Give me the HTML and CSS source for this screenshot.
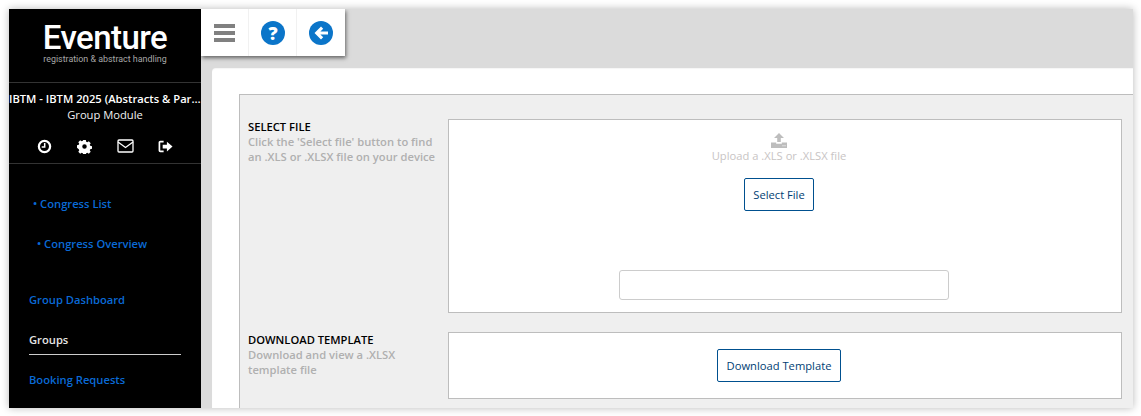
FILE: index.html
```html
<!DOCTYPE html>
<html lang="en">
<head>
<meta charset="utf-8">
<title>Eventure</title>
<link rel="stylesheet" href="styles.css">
</head>
<body>
<div class="window">
  <aside class="sidebar">
    <div class="brand">
      <div class="logo">Eventure</div>
      <div class="tagline">registration &amp; abstract handling</div>
    </div>
    <div class="congress">
      <div class="congress-name">IBTM - IBTM 2025 (Abstracts &amp; Participants)</div>
      <div class="module">Group Module</div>
    </div>
    <div class="tools">
      <svg class="tool" viewBox="0 0 16 16"><circle cx="8" cy="8" r="6" fill="none" stroke="#fff" stroke-width="2.4"/><path d="M8.2 4.2v4.3H5" fill="none" stroke="#fff" stroke-width="1.6"/></svg>
      <svg class="tool tool-shift" viewBox="0 0 16 16"><path fill="#fff" fill-rule="evenodd" d="M6.6 1h2.8l.4 1.9 1.2.5 1.6-1 2 2-1 1.6.5 1.2 1.9.4v2.8l-1.9.4-.5 1.2 1 1.6-2 2-1.6-1-1.2.5-.4 1.9H6.6l-.4-1.9-1.2-.5-1.6 1-2-2 1-1.6-.5-1.2L0 9.4V6.6l1.9-.4.5-1.2-1-1.6 2-2 1.6 1 1.2-.5zM8 5.6a2.4 2.4 0 1 0 0 4.8 2.4 2.4 0 0 0 0-4.8z"/></svg>
      <svg class="tool tool-wide" viewBox="0 0 17 14"><rect x="1" y="1" width="15" height="12" rx="1" fill="none" stroke="#fff" stroke-width="1.3"/><path d="M1 3l7.500 5.500L16 3" fill="none" stroke="#fff" stroke-width="1.3"/></svg>
      <svg class="tool" viewBox="0 0 16 16"><path d="M6 2.800H2.500a1 1 0 0 0-1 1v8.400a1 1 0 0 0 1 1H6" fill="none" stroke="#fff" stroke-width="1.800"/><path fill="#fff" d="M5 6h4.500V2.800L15.500 8l-6 5.200V10H5z"/></svg>
    </div>
    <nav class="nav">
      <a class="nav-link sub">• Congress List</a>
      <a class="nav-link sub sub-deep">• Congress Overview</a>
      <a class="nav-link main">Group Dashboard</a>
      <a class="nav-link main active">Groups</a>
      <a class="nav-link main">Booking Requests</a>
    </nav>
  </aside>
  <main class="content">
    <div class="topbar">
      <div class="toolbar">
        <button class="tool-btn">
          <svg class="menu-icon" viewBox="0 0 22 18"><path d="M0 0h21v4H0zM0 7h21v4H0zM0 14h21v4H0z" fill="#808080"/></svg>
        </button>
        <button class="tool-btn">
          <svg class="round-icon" viewBox="0 0 24 24"><circle cx="12" cy="12" r="12" fill="#0b75c9"/><text class="q-mark" x="12" y="18.500" text-anchor="middle">?</text></svg>
        </button>
        <button class="tool-btn">
          <svg class="round-icon" viewBox="0 0 24 24"><circle cx="12" cy="12" r="12" fill="#0b75c9"/><path d="M12 5.500 5.500 12l6.500 6.500 2.200-2.200-2.800-2.700H19v-3.200h-7.600l2.800-2.700z" fill="#fff"/></svg>
        </button>
      </div>
    </div>
    <div class="card">
      <div class="panel">
        <section class="row row-file">
          <div class="label">
            <h3>SELECT FILE</h3>
            <p>Click the 'Select file' button to find an .XLS or .XLSX file on your device</p>
          </div>
          <div class="box box-file">
            <svg class="upload" viewBox="0 0 16 15"><path fill="#bdbdbd" fill-rule="evenodd" d="M8 0l5 5H9.800v4H6.200V5H3zM0 9.500h5.200v1.300h5.600V9.500H16V15H0zM11.500 12.200v1h1v-1zM13.500 12.200v1h1v-1z"/></svg>
            <div class="hint">Upload a .XLS or .XLSX file</div>
            <button class="btn btn-select">Select File</button>
            <div class="filename"></div>
          </div>
        </section>
        <section class="row row-template">
          <div class="label">
            <h3>DOWNLOAD TEMPLATE</h3>
            <p>Download and view a .XLSX template file</p>
          </div>
          <div class="box box-template">
            <button class="btn btn-template">Download Template</button>
          </div>
        </section>
      </div>
    </div>
  </main>
</div>
</body>
</html>
```
FILE: styles.css
```css
* { box-sizing: border-box; }
html, body { margin: 0; height: 100%; background: #fff; overflow: hidden; }
body { padding: 9px 8px 8px 9px; font-family: "Open Sans", sans-serif; font-size: 11.2px; }
.window {
  display: flex;
  width: 1124px;
  height: 399px;
  overflow: hidden;
  box-shadow: 0 0 8px rgba(0,0,0,.28);
}
.sidebar { width: 192px; flex: none; background: #000; color: #fff; }
.brand { height: 74px; padding-top: 13px; border-bottom: 1px solid #333; text-align: center; }
.logo { font-family: Roboto, sans-serif; font-size: 33px; font-weight: 500; line-height: 31px; letter-spacing: -.55px; color: #fff; }
.tagline { font-family: Roboto, sans-serif; font-size: 8.9px; line-height: 10px; color: #a8a8a8; margin-top: 1px; }
.congress { padding-top: 8px; text-align: center; }
.congress-name { line-height: 16px; font-weight: 600; white-space: nowrap; overflow: hidden; text-overflow: ellipsis; }
.module { line-height: 16px; color: #f0f0f0; }
.tools { display: flex; justify-content: space-between; align-items: center; height: 41px; padding: 6px 28px 0 28px; border-bottom: 1px solid #333; }
.tool { width: 15px; height: 15px; }
.tool-shift { margin-left: 1px; }
.tool-wide { width: 17px; height: 14px; margin-left: 1px; }
.nav { display: flex; flex-direction: column; }
.nav-link { display: block; font-weight: 600; line-height: 16px; color: #0a6ad6; }
.sub { padding-left: 24px; margin-top: 24px; }
.sub:first-child { margin-top: 32px; }
.sub-deep { padding-left: 28px; }
.main { margin: 24px 20px 0 20px; }
.sub-deep + .main { margin-top: 40px; }
.active { color: #e6e6e6; padding-bottom: 6px; border-bottom: 1px solid #ccc; margin-bottom: -7px; }
.content { flex: 1; min-width: 0; background: #dbdbdb; display: flex; flex-direction: column; }
.topbar { height: 59px; flex: none; }
.toolbar {
  display: flex;
  width: 144px;
  height: 47px;
  background: #fff;
  box-shadow: 1px 2px 4px rgba(0,0,0,.55);
}
.tool-btn { width: 48px; flex: none; display: flex; align-items: center; justify-content: center; border: 0; border-right: 1px solid #f1f1f1; background: #fff; padding: 0; }
.tool-btn:last-child { border-right: 0; }
.menu-icon { width: 22px; height: 18px; margin-left: 1px; }
.round-icon { width: 24px; height: 24px; }
.q-mark { font-family: "Open Sans", sans-serif; font-weight: 800; font-size: 18px; fill: #fff; }
.card { flex: 1; margin-left: 11px; background: #fff; border-radius: 4px 0 0 0; padding: 26px 0 0 27px; box-shadow: inset 0 1px 1px rgba(0,0,0,.04); }
.panel { background: #efefef; border: 1px solid #bdbdbd; border-right: 0; border-bottom: 0; padding: 24px 11px 0 8px; height: 100%; }
.row { display: flex; }
.row-template { margin-top: 19px; }
.label { width: 200px; flex: none; line-height: 15px; font-weight: 600; padding-right: 10px; }
.label h3 { margin: 0; font-size: inherit; line-height: 15px; font-weight: 600; color: #000; }
.label p { margin: 0; color: #b0b0b0; }
.box { flex: 1; background: #fff; border: 1px solid #bdbdbd; display: flex; flex-direction: column; align-items: center; }
.box-file { height: 194px; padding-top: 13px; }
.upload { width: 16px; height: 15px; display: block; margin-right: 12px; }
.hint { line-height: 15px; color: #c8c4c4; margin: 0 12px 0 0; }
.btn { font-family: "Open Sans", sans-serif; font-size: inherit; color: #003e74; background: #fff; border: 1px solid #00508f; border-radius: 2px; padding: 0; margin-right: 12px; }
.btn-select { width: 70px; height: 33px; margin-top: 15px; }
.filename { width: 330px; height: 30px; margin: 59px 2px 0 0; background: #fff; border: 1px solid #ccc; border-radius: 3px; }
.box-template { height: 67px; padding-top: 16px; }
.btn-template { width: 124px; height: 33px; }
```
